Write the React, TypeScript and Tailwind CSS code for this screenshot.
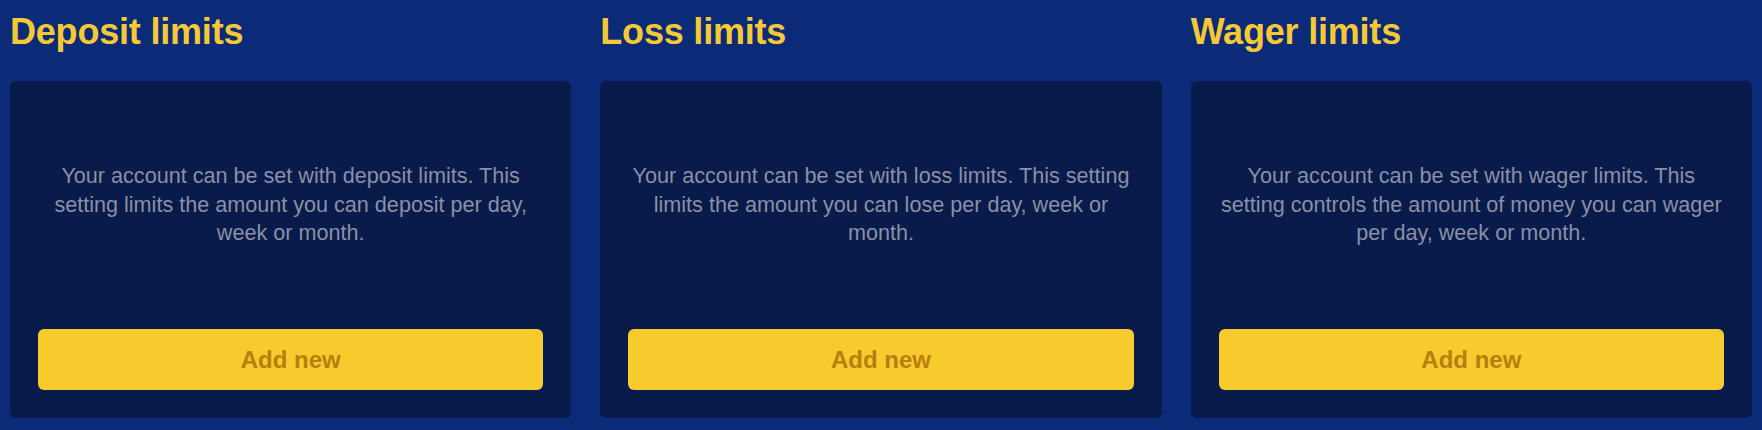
import React from "react";

const cards = [
  {
    title: "Deposit limits",
    text: "Your account can be set with deposit limits. This setting limits the amount you can deposit per day, week or month.",
  },
  {
    title: "Loss limits",
    text: "Your account can be set with loss limits. This setting limits the amount you can lose per day, week or month.",
  },
  {
    title: "Wager limits",
    text: "Your account can be set with wager limits. This setting controls the amount of money you can wager per day, week or month.",
  },
];

export default function App() {
  return (
    <div
      className="w-full h-[430px] bg-[#0b2a78] px-[10px] pt-[12px] grid grid-cols-3 gap-x-[29px]"
      style={{ fontFamily: '"Liberation Sans", Arial, Helvetica, sans-serif' }}
    >
      {cards.map((c) => (
        <div key={c.title} className="flex flex-col">
          <h2 className="text-[36px] leading-[40px] font-bold text-[#f5c936] mb-[29px] tracking-[-0.2px]">
            {c.title}
          </h2>
          <div className="h-[337px] rounded-md bg-[#091b4a] flex flex-col px-[28px] pb-[28px]">
            <div className="flex-1 flex items-center justify-center">
              <p className="text-[21.6px] leading-[28.4px] text-[#8a90a6] text-center">{c.text}</p>
            </div>
            <button className="h-[61px] w-full rounded-md bg-[#f7ca2e] text-[#b97e0e] font-bold text-[24px] leading-[28px] flex items-center justify-center">
              Add new
            </button>
          </div>
        </div>
      ))}
    </div>
  );
}
